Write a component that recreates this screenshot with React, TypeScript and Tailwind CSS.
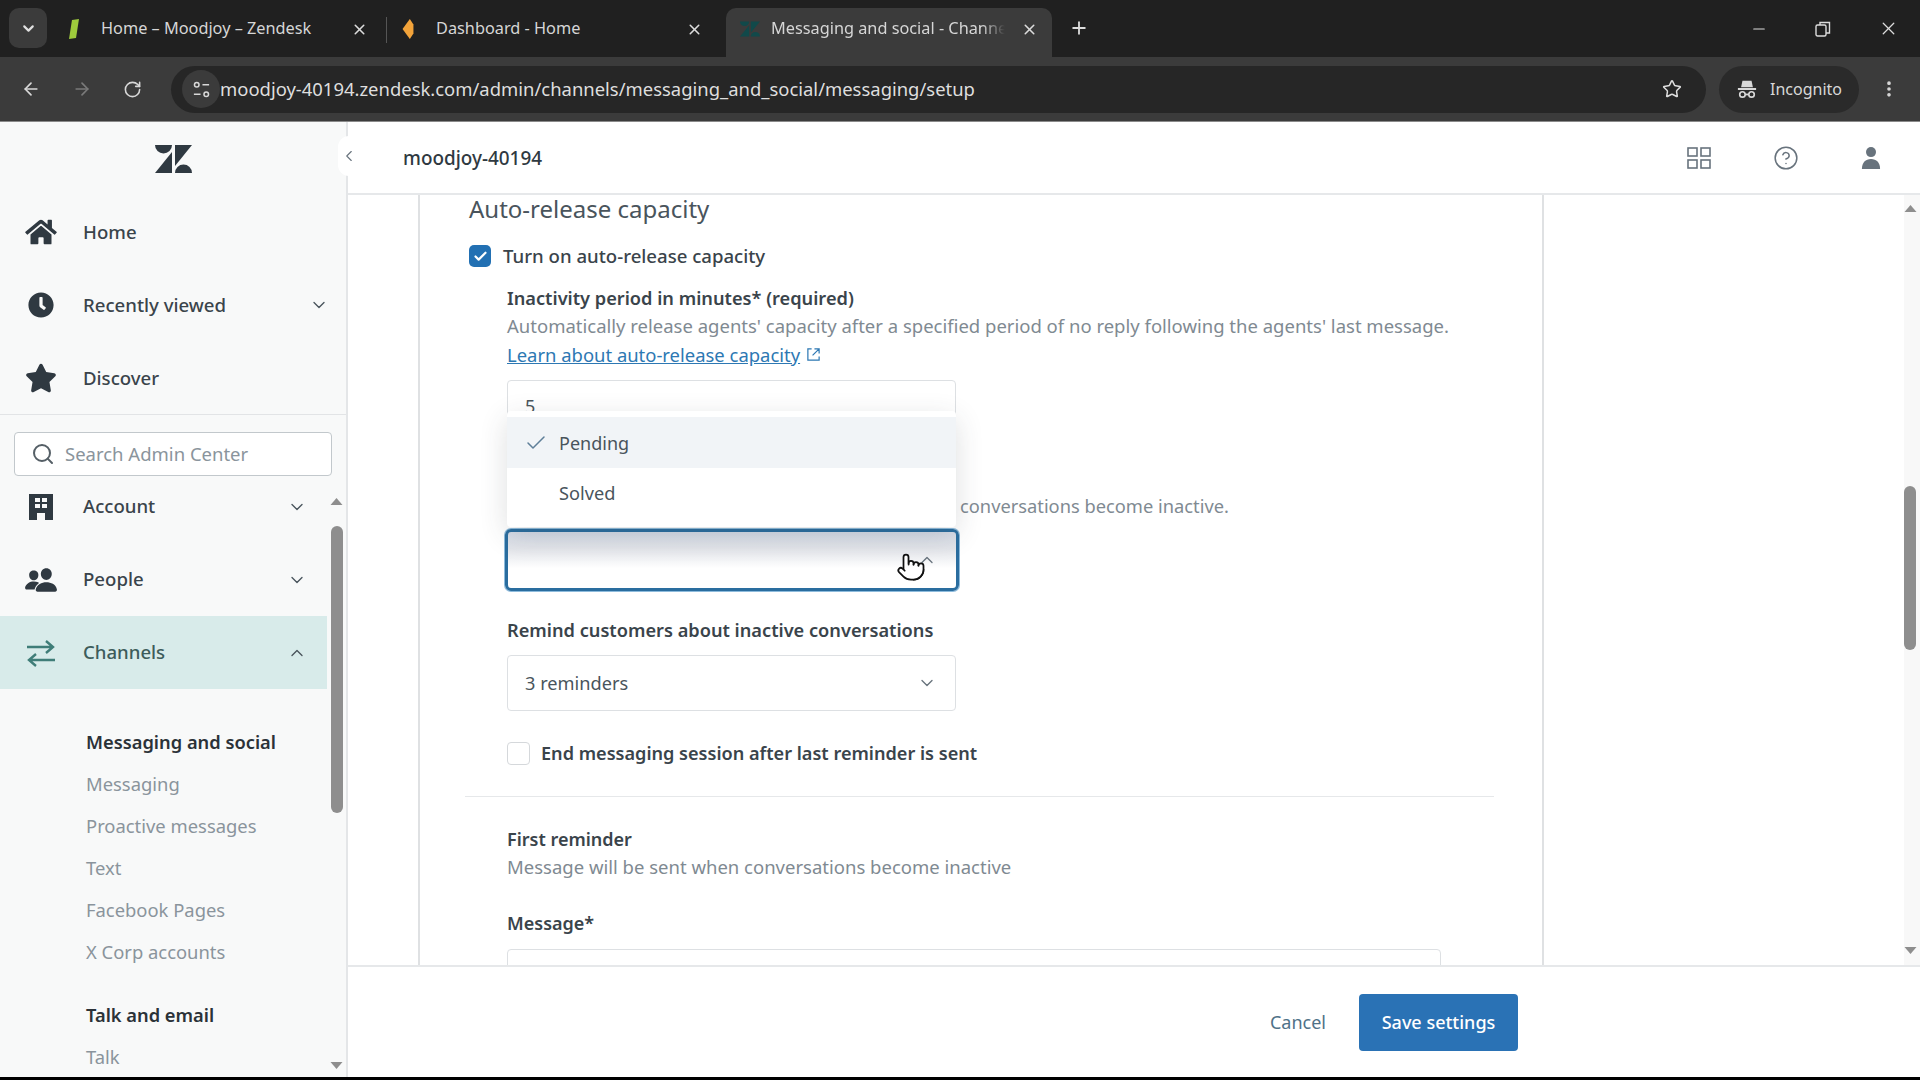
import React from "react";
import { ArrowLeft, ArrowRight, RotateCw, Star, MoreVertical, Plus, X, Minus, ChevronDown, ChevronUp, ChevronLeft, Search, Check, Pointer, CircleHelp } from "lucide-react";
import { FaHome, FaClock, FaStar } from "react-icons/fa";
import { IoPeople } from "react-icons/io5";

const Logo = ({ className = "" }: { className?: string }) => (
  <svg viewBox="0 0 37 28" className={className} fill="currentColor">
    <path d="M0 0H17A8.5 8.5 0 0 1 0 0Z" />
    <path d="M17 7V28H0Z" />
    <path d="M20 21V0H37Z" />
    <path d="M20 28A8.5 8.5 0 0 1 37 28Z" />
  </svg>
);

const Building = () => (
  <svg viewBox="0 0 24 26" className="w-[24px] h-[26px]" fill="#2f3941">
    <path fillRule="evenodd" d="M0 0H24V26H16V19H8V26H0ZM6 4V8H11V4ZM13 4V8H18V4ZM6 10V14H11V10ZM13 10V14H18V10Z" />
  </svg>
);

const Channels = () => (
  <svg viewBox="0 0 30 30" className="w-[30px] h-[30px]" fill="none" stroke="#3f7d78" strokeWidth="2.4">
    <path d="M1 9H27M20 3L27 9L20 15" />
    <path d="M29 22H3M10 16L3 22L10 28" />
  </svg>
);

const Tune = () => (
  <svg viewBox="0 0 20 20" className="w-[19px] h-[19px]" fill="none" stroke="#d8d8d8" strokeWidth="1.6">
    <circle cx="5" cy="5" r="2.4" />
    <path d="M11 5H18M2 15H9" />
    <circle cx="15" cy="15" r="2.4" />
  </svg>
);

const Incognito = () => (
  <svg viewBox="0 0 22 22" className="w-[20px] h-[20px]" fill="#d8d8d8">
    <path d="M6 2H16L17.5 9H4.5ZM1 10H21V12H1Z" />
    <circle cx="6" cy="17" r="3" fill="none" stroke="#d8d8d8" strokeWidth="1.8" />
    <circle cx="16" cy="17" r="3" fill="none" stroke="#d8d8d8" strokeWidth="1.8" />
    <path d="M9 16H13V18H9Z" />
  </svg>
);

const Grid = () => (
  <svg viewBox="0 0 24 24" className="w-[24px] h-[24px]" fill="none" stroke="#68737d" strokeWidth="1.6">
    <rect x="1" y="2" width="9" height="8" />
    <rect x="14" y="2" width="9" height="8" />
    <rect x="1" y="14" width="9" height="8" />
    <rect x="14" y="14" width="9" height="8" />
  </svg>
);

const User = () => (
  <svg viewBox="0 0 22 26" className="w-[20px] h-[24px]" fill="#68737d">
    <circle cx="11" cy="6.5" r="5.5" />
    <path d="M1 25C1 18 5 14 11 14S21 18 21 25Z" />
  </svg>
);

const External = () => (
  <svg viewBox="0 0 16 16" className="w-[15px] h-[15px]" fill="none" stroke="#2d78b3" strokeWidth="1.3">
    <path d="M6 2H2V14H14V10M9 2H14V7M14 2L7 9" />
  </svg>
);

const Tab = ({ icon, title, active, w, closeRight }: { icon: React.ReactNode; title: string; active?: boolean; w: string; closeRight: string }) => (
  <div className={`${w} h-[49px] pb-[7px] flex items-center shrink-0 rounded-t-[10px] ${active ? "bg-[#3b3b3b]" : ""}`}>
    {icon}
    <div className="flex-1 min-w-0">
      <span className={`block whitespace-nowrap text-[16.3px] text-[#d6d6d6] pb-[2px] ${active ? "w-[234px] [mask-image:linear-gradient(to_right,black_90%,transparent)]" : ""}`}>{title}</span>
    </div>
    <X className={`w-[17px] h-[17px] text-[#dcdcdc] ${closeRight}`} strokeWidth={2.2} />
  </div>
);

const NavRow = ({ icon, label, chevron, active, pad, lift }: { icon: React.ReactNode; label: string; chevron?: "down" | "up"; active?: boolean; pad: string; lift?: boolean }) => (
  <div className={`h-[73px] flex items-center ${pad} ${active ? "bg-[#d8ebea] text-[#3d5c5b]" : "text-[#3a444b]"}`}>
    <div className="w-[83px] shrink-0 flex justify-center pr-[1px]"><div className="w-[42px] flex justify-center">{icon}</div></div>
    <span className={`flex-1 text-[18.6px] font-medium ${lift ? "pb-[2px]" : ""}`}>{label}</span>
    {chevron === "down" && <ChevronDown className="w-[20px] h-[20px] text-[#49545c]" strokeWidth={1.6} />}
    {chevron === "up" && <ChevronUp className="w-[20px] h-[20px] text-[#49545c]" strokeWidth={1.6} />}
  </div>
);

const SubItem = ({ label, bold }: { label: string; bold?: boolean }) => (
  <div className={`h-[42px] flex items-center pl-[86px] ${bold ? "text-[18.3px] font-semibold text-[#2b3238]" : "text-[18.4px] text-[#8a949c]"}`}>{label}</div>
);

export default function App() {
  return (
    <div className="w-[1920px] h-[1080px] overflow-hidden flex flex-col bg-black font-['Noto_Sans',sans-serif]">
      {/* tab strip */}
      <div className="h-[57px] bg-[#202020] flex items-end pl-[9px] shrink-0">
        <div className="self-start mt-[8px] w-[38px] h-[40px] rounded-[10px] bg-[#3b3b3b] flex items-center justify-center mr-[15px]">
          <ChevronDown className="w-[17px] h-[17px] text-[#e0e0e0]" strokeWidth={3} />
        </div>
        <Tab w="w-[324px]" closeRight="mr-[18px]" title="Home – Moodjoy – Zendesk" icon={
          <svg viewBox="0 0 10 20" className="w-[10px] h-[20px] mr-[22px] ml-[7px] shrink-0"><path d="M3 1L10 0L7 19L0 20Z" fill="#9ecb3c" /></svg>
        } />
        <div className="w-px h-[26px] bg-[#555] self-center mb-[-2px] shrink-0" />
        <Tab w="w-[339px] pl-[15px]" closeRight="mr-[23px]" title="Dashboard - Home" icon={
          <svg viewBox="0 0 12 22" className="w-[12px] h-[20px] mr-[22px] shrink-0"><path d="M8 0L0 11L8 22L12 16V6Z" fill="#f2a33a" /></svg>
        } />
        <Tab w="w-[326px] pl-[14px]" active closeRight="mr-[14px]" title="Messaging and social - Channe" icon={
          <Logo className="w-[20px] h-[16px] mr-[11px] text-[#11494a] shrink-0" />
        } />
        <Plus className="w-[20px] h-[20px] text-[#dcdcdc] ml-[17px] mb-[19px]" strokeWidth={2.2} />
        <div className="flex-1" />
        <div className="self-start h-[57px] flex items-center gap-[47px] pr-[21px]">
          <Minus className="w-[18px] h-[18px] text-[#dcdcdc]" strokeWidth={1.5} />
          <svg viewBox="0 0 16 16" className="w-[16px] h-[16px]" fill="none" stroke="#dcdcdc" strokeWidth="1.4"><rect x="1" y="4" width="10" height="11" rx="1.5" /><path d="M5 4V1.5H14.5V12H11" /></svg>
          <X className="w-[21px] h-[21px] text-[#dcdcdc]" strokeWidth={1.5} />
        </div>
      </div>
      {/* toolbar */}
      <div className="h-[65px] bg-[#3b3b3b] flex items-center shrink-0 border-b border-[#8a8a8a]">
        <div className="w-[171px] flex items-center pl-[21px] gap-[31px] shrink-0">
          <ArrowLeft className="w-[20px] h-[20px] text-[#d8d8d8]" strokeWidth={2} />
          <ArrowRight className="w-[20px] h-[20px] text-[#7a7a7a]" strokeWidth={2} />
          <RotateCw className="w-[19px] h-[19px] text-[#d8d8d8]" strokeWidth={2} />
        </div>
        <div className="w-[1535px] h-[47px] rounded-full bg-[#262626] flex items-center pl-[11px] pr-[24px] shrink-0">
          <div className="w-[38px] h-[38px] rounded-full bg-[#3b3b3b] flex items-center justify-center"><Tune /></div>
          <span className="flex-1 text-[18.45px] text-[#dedede]">moodjoy-40194.zendesk.com/admin/channels/messaging_and_social/messaging/setup</span>
          <Star className="w-[20px] h-[20px] text-[#dedede]" strokeWidth={1.8} />
        </div>
        <div className="ml-[13px] w-[140px] h-[47px] rounded-full bg-[#2a2a2a] flex items-center pl-[18px] gap-[13px] shrink-0">
          <Incognito />
          <span className="text-[16px] text-[#d8d8d8]">Incognito</span>
        </div>
        <MoreVertical className="w-[20px] h-[20px] text-[#d8d8d8] ml-[20px]" strokeWidth={2.4} />
      </div>
      {/* page */}
      <div className="h-[955px] bg-white flex shrink-0">
        {/* sidebar */}
        <div className="w-[348px] shrink-0 bg-[#f8f9f9] border-r-[2px] border-[#e4e6e8] flex flex-col relative">
          <div className="h-[73px] flex items-center justify-center shrink-0"><Logo className="w-[37px] h-[28px] text-[#2f3941]" /></div>
          <div className="border-b border-[#e2e4e6] shrink-0">
            <NavRow pad="pr-[17px]" icon={<FaHome className="w-[32px] h-[28px] text-[#2f3941]" />} label="Home" />
            <NavRow pad="pr-[17px]" icon={<FaClock className="w-[26px] h-[26px] text-[#2f3941]" />} label="Recently viewed" chevron="down" />
            <NavRow pad="pr-[17px]" icon={<FaStar className="w-[32px] h-[30px] text-[#2f3941]" />} label="Discover" />
          </div>
          <div className="pt-[17px] px-[14px] shrink-0">
            <div className="h-[44px] rounded-[4px] bg-white border border-[#c2c8cc] flex items-center pl-[16px] gap-[10px]">
              <Search className="w-[24px] h-[24px] text-[#555f66]" strokeWidth={2} />
              <span className="text-[18.5px] text-[#8a949c]">Search Admin Center</span>
            </div>
          </div>
          <div className="flex-1 flex min-h-0">
            <div className="w-[327px] shrink-0 overflow-hidden">
              <div className="-mt-[6px]">
                <NavRow lift pad="pr-[20px]" icon={<Building />} label="Account" chevron="down" />
                <NavRow lift pad="pr-[20px]" icon={<IoPeople className="w-[34px] h-[34px] text-[#2f3941]" />} label="People" chevron="down" />
                <NavRow lift pad="pr-[20px]" icon={<Channels />} label="Channels" chevron="up" active />
              </div>
              <div className="pt-[32px]">
                <SubItem bold label="Messaging and social" />
                <SubItem label="Messaging" />
                <SubItem label="Proactive messages" />
                <SubItem label="Text" />
                <SubItem label="Facebook Pages" />
                <SubItem label="X Corp accounts" />
                <div className="h-[21px]" />
                <SubItem bold label="Talk and email" />
                <SubItem label="Talk" />
              </div>
            </div>
            <div className="flex-1 flex flex-col items-center pt-[22px] pb-[8px]">
              <svg viewBox="0 0 12 7" className="w-[13px] h-[7px]"><path d="M6 0L12 7H0Z" fill="#8e8e8e" /></svg>
              <div className="w-[12px] h-[287px] rounded-full bg-[#8e8e8e] mt-[21px]" />
              <div className="flex-1" />
              <svg viewBox="0 0 12 7" className="w-[13px] h-[7px]"><path d="M6 7L12 0H0Z" fill="#8e8e8e" /></svg>
            </div>
          </div>
          <div className="absolute right-[-14px] top-[14px] w-[22px] h-[40px] bg-white rounded-full flex items-center justify-center">
            <ChevronLeft className="w-[18px] h-[18px] text-[#68737d]" strokeWidth={1.5} />
          </div>
        </div>
        {/* main */}
        <div className="flex-1 min-w-0 flex flex-col">
          <div className="h-[73px] shrink-0 border-b-[2px] border-[#e6e8ea] flex items-center pl-[55px] pr-[39px] pt-[1px]">
            <span className="flex-1 text-[18.9px] font-medium text-[#2f3941]">moodjoy-40194</span>
            <div className="flex items-center gap-[62px]">
              <Grid />
              <CircleHelp className="w-[26px] h-[26px] text-[#68737d]" strokeWidth={1.4} />
              <User />
            </div>
          </div>
          <div className="flex-1 min-h-0 flex overflow-hidden">
            <div className="flex-1 min-w-0">
              <div className="ml-[70px] w-[1126px] h-full border-x-[2px] border-[#dfe1e3] pl-[49px] overflow-hidden">
                <h2 className="h-[28px] leading-[28px] text-[24px] text-[#49545c] font-normal">Auto-release capacity</h2>
                <div className="mt-[22px] h-[22px] flex items-center gap-[12px]">
                  <div className="w-[22px] h-[22px] rounded-[5px] bg-[#2270b3] flex items-center justify-center">
                    <Check className="w-[15px] h-[15px] text-white" strokeWidth={3.5} />
                  </div>
                  <span className="text-[18.6px] font-medium text-[#3a444b]">Turn on auto-release capacity</span>
                </div>
                <div className="relative pl-[38px] mt-[17px]">
                  <div className="h-[28px] leading-[28px] text-[18.2px] font-semibold text-[#3a444b]">Inactivity period in minutes* (required)</div>
                  <div className="h-[28px] leading-[28px] text-[18.5px] text-[#7f8a92]">Automatically release agents' capacity after a specified period of no reply following the agents' last message.</div>
                  <div className="h-[29px] leading-[28px] text-[18.45px] text-[#2d78b3] flex items-center gap-[6px]"><span className="underline">Learn about auto-release capacity</span><External /></div>
                  <div className="mt-[11px] w-[449px] h-[56px] rounded-[4px] border border-[#dde0e3] pl-[17px] pt-[12px] text-[18px] text-[#49545c]">5</div>
                  <div className="mt-[56px] h-[28px] leading-[28px] pl-[453px] text-[18.3px] text-[#7f8a92]">conversations become inactive.</div>
                  <div className="mt-[9px] -ml-[2px] w-[454px] h-[62px] rounded-[6px] border-[3px] border-[#2a6d9f] shadow-[0_0_0_1px_#8dbbdc] bg-[linear-gradient(to_bottom,#d5dbe7_0%,#e3e5ea_30%,#ffffff_65%)] flex items-center justify-end pr-[19px]">
                    <ChevronUp className="w-[20px] h-[20px] text-[#68737d]" strokeWidth={1.6} />
                  </div>
                  <div className="mt-[25px] h-[28px] leading-[28px] text-[18.2px] font-semibold text-[#3a444b]">Remind customers about inactive conversations</div>
                  <div className="mt-[11px] w-[449px] h-[56px] rounded-[4px] border border-[#dde0e3] pl-[17px] pr-[18px] flex items-center justify-between text-[18.2px] text-[#49545c]">
                    <span className="pt-[1px]">3 reminders</span>
                    <ChevronDown className="w-[20px] h-[20px] text-[#68737d]" strokeWidth={1.6} />
                  </div>
                  <div className="mt-[31px] h-[23px] flex items-center gap-[11px]">
                    <div className="w-[23px] h-[23px] rounded-[4px] border border-[#d5d8db] bg-white" />
                    <span className="text-[18.1px] font-semibold text-[#3a444b]">End messaging session after last reminder is sent</span>
                  </div>
                  <div className="mt-[31px] -ml-[42px] w-[1029px] border-t border-[#e6e8ea]" />
                  <div className="mt-[28px] h-[28px] leading-[28px] text-[18px] font-semibold text-[#3a444b]">First reminder</div>
                  <div className="h-[28px] leading-[28px] text-[18.5px] text-[#7f8a92]">Message will be sent when conversations become inactive</div>
                  <div className="mt-[28px] h-[28px] leading-[28px] text-[18px] font-semibold text-[#3a444b]">Message*</div>
                  <div className="mt-[12px] w-[934px] h-[60px] rounded-[4px] border border-[#dde0e3]" />
                  {/* open menu */}
                  <div className="absolute left-[38px] top-[127px] w-[449px] h-[116px] bg-white rounded-[4px] shadow-[0_8px_28px_rgba(47,57,65,0.16)] pt-[6px]">
                    <div className="h-[51px] bg-[#f1f4f7] flex items-center pl-[17px] text-[18px] text-[#49545c]">
                      <Check className="w-[24px] h-[24px] text-[#5f7f99] mr-[11px]" strokeWidth={1.5} />
                      <span className="pt-[1px]">Pending</span>
                    </div>
                    <div className="h-[50px] pt-[2px] flex items-center pl-[52px] text-[18.2px] text-[#49545c]">Solved</div>
                  </div>
                  <Pointer className="absolute left-[427px] top-[263px] w-[30px] h-[40px] text-[#111] fill-white" strokeWidth={1.4} />
                </div>
              </div>
            </div>
            <div className="w-[16px] shrink-0 bg-[#f8f8f8] flex flex-col items-center pt-[10px] pb-[11px] pr-[4px]">
              <svg viewBox="0 0 12 7" className="w-[13px] h-[7px]"><path d="M6 0L12 7H0Z" fill="#8e8e8e" /></svg>
              <div className="w-[12px] h-[164px] rounded-full bg-[#8e8e8e] mt-[274px]" />
              <div className="flex-1" />
              <svg viewBox="0 0 12 7" className="w-[13px] h-[7px]"><path d="M6 7L12 0H0Z" fill="#8e8e8e" /></svg>
            </div>
          </div>
          <div className="h-[112px] shrink-0 border-t-[2px] border-[#e6e8ea] flex items-center justify-end pr-[402px] gap-[33px]">
            <span className="text-[18px] text-[#4f7188]">Cancel</span>
            <button className="w-[159px] h-[57px] rounded-[4px] bg-[#2a72b5] text-white text-[18px] font-medium">Save settings</button>
          </div>
        </div>
      </div>
    </div>
  );
}
